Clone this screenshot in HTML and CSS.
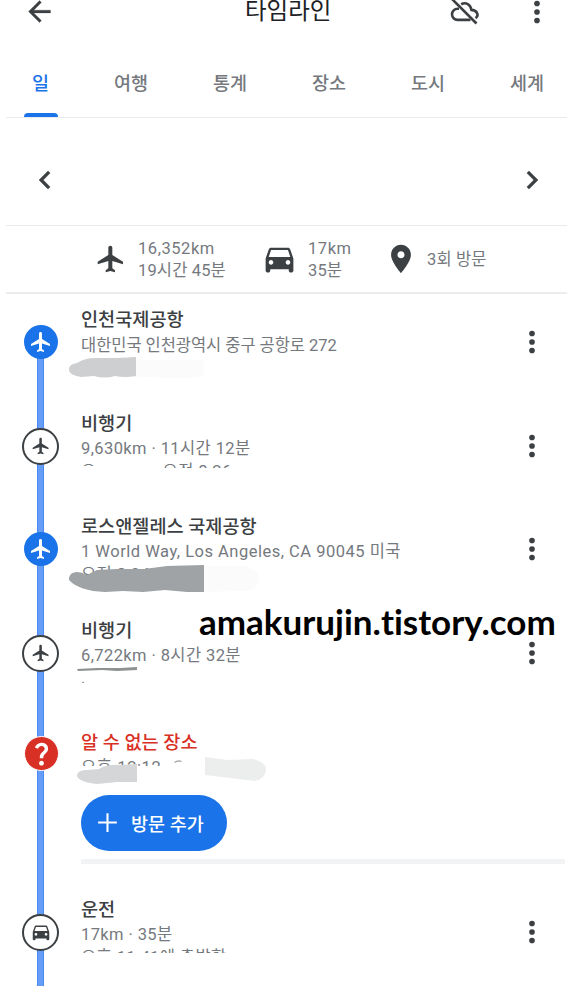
FILE: index.html
```html
<!DOCTYPE html>
<html lang="ko">
<head>
    <meta charset="UTF-8">
    <meta name="viewport" content="width=device-width, initial-scale=1.0">
    <title>타임라인</title>
    <link rel="stylesheet" href="styles.css">
</head>
<body>
    <!-- shared icons -->
    <svg class="defs" width="0" height="0">
        <symbol id="plane" viewBox="0 0 24 24"><path d="M21 16v-2l-8-5V3.5c0-.83-.67-1.5-1.5-1.5S10 2.67 10 3.5V9l-8 5v2l8-2.5V19l-2 1.5V22l3.5-1 3.5 1v-1.5L13 19v-5.5l8 2.5z"/></symbol>
        <symbol id="car" viewBox="0 0 24 24"><path d="M18.92 6.01C18.72 5.42 18.16 5 17.5 5h-11c-.66 0-1.21.42-1.42 1.01L3 12v8c0 .55.45 1 1 1h1c.55 0 1-.45 1-1v-1h12v1c0 .55.45 1 1 1h1c.55 0 1-.45 1-1v-8l-2.08-5.99zM6.5 16c-.83 0-1.5-.67-1.5-1.5S5.67 13 6.5 13s1.5.67 1.5 1.5S7.33 16 6.5 16zm11 0c-.83 0-1.5-.67-1.5-1.5s.67-1.5 1.5-1.5 1.5.67 1.5 1.5-.67 1.5-1.5 1.5zM5 11l1.5-4.5h11L19 11H5z"/></symbol>
        <symbol id="more" viewBox="0 0 24 24"><circle cx="12" cy="6" r="2"/><circle cx="12" cy="12" r="2"/><circle cx="12" cy="18" r="2"/></symbol>
    </svg>

    <div class="app">
        <header class="header">
            <svg class="back" viewBox="0 0 24 24"><path d="M20 11H7.83l5.59-5.59L12 4l-8 8 8 8 1.41-1.41L7.83 13H20v-2z"/></svg>
            <h1>타임라인</h1>
            <svg class="cloud" viewBox="0 0 29 29">
                <g fill="none" stroke="#3c4043" stroke-width="2.6">
                    <path d="M9 9.7H7.6A5.6 5.6 0 0 0 7.6 20.9H20.5"/>
                    <path d="M11.2 5.4C15 2.8 20.5 4.6 21.4 10.9C27.5 11.2 29.2 16.5 25.6 19.2"/>
                    <path d="M2 0L26.5 24.5"/>
                </g>
            </svg>
            <svg class="more"><use href="#more"/></svg>
        </header>

        <nav class="tabs">
            <div class="tab active">일</div>
            <div class="tab">여행</div>
            <div class="tab">통계</div>
            <div class="tab">장소</div>
            <div class="tab">도시</div>
            <div class="tab">세계</div>
        </nav>

        <div class="date-nav">
            <svg viewBox="0 0 24 24"><path d="M15.41 7.41L14 6l-6 6 6 6 1.41-1.41L10.83 12z"/></svg>
            <svg viewBox="0 0 24 24"><path d="M10 6L8.59 7.41 13.17 12l-4.58 4.59L10 18l6-6z"/></svg>
        </div>

        <div class="summary">
            <svg class="sum-plane"><use href="#plane"/></svg>
            <div class="stat stat-flight">16,352km<br><span class="tight">19시간 45분</span></div>
            <svg class="sum-car"><use href="#car"/></svg>
            <div class="stat stat-drive">17km<br><span class="tight">35분</span></div>
            <svg class="sum-pin" viewBox="0 0 24 24"><path d="M12 2C8.13 2 5 5.13 5 9c0 5.25 7 13 7 13s7-7.75 7-13c0-3.87-3.13-7-7-7zm0 9.5c-1.38 0-2.5-1.12-2.5-2.5s1.12-2.5 2.5-2.5 2.5 1.12 2.5 2.5-1.12 2.5-2.5 2.5z"/></svg>
            <div class="stat tight">3회 방문</div>
        </div>

        <main class="timeline">
            <div class="entry first">
                <div class="node place"><svg><use href="#plane"/></svg></div>
                <div class="info">
                    <h2>인천국제공항</h2>
                    <p class="address-kr">대한민국 인천광역시 중구 공항로 272</p>
                    <svg class="smudge smudge-1" viewBox="0 0 140 24">
                        <path fill="#fbfbfb" d="M60 3H134V20Q100 22 60 19z"/>
                        <path fill="#cecfd1" d="M0 11Q1 7 8 6Q16 1 26 1L48 1L67 0V19Q56 21 46 19Q36 22 25 19L12 20Q0 18 0 13z"/>
                    </svg>
                </div>
                <svg class="more"><use href="#more"/></svg>
            </div>

            <div class="entry">
                <div class="node move"><svg><use href="#plane"/></svg></div>
                <div class="info">
                    <h2>비행기</h2>
                    <p>9,630km · 11시간 12분</p>
                    <p class="cut cut-flight"><span class="faint">오</span><span>오전 8:26</span></p>
                </div>
                <svg class="more"><use href="#more"/></svg>
            </div>

            <div class="entry">
                <div class="node place"><svg><use href="#plane"/></svg></div>
                <div class="info">
                    <h2>로스앤젤레스 국제공항</h2>
                    <p class="address">1 World Way, Los Angeles, CA 90045 미국</p>
                    <p class="cut cut-la">오전 8:24</p>
                    <svg class="smudge smudge-2" viewBox="0 0 192 28">
                        <path fill="#fbfbfb" d="M130 1L172 1Q190 3 190 14Q190 26 172 26L130 27z"/>
                        <path fill="#9fa3a5" d="M0 13Q1 7 8 7Q13 7 18 10L28 5L48 4L75 4L98 1L135 0V27L118 27L96 25L74 27L54 26L36 27Q10 26 0 15z"/>
                    </svg>
                </div>
                <svg class="more"><use href="#more"/></svg>
            </div>

            <div class="entry second-flight">
                <div class="node move"><svg><use href="#plane"/></svg></div>
                <div class="info">
                    <h2>비행기</h2>
                    <p>6,722km · 8시간 32분</p>
                    <svg class="smudge smudge-3" viewBox="0 0 62 18">
                        <path fill="#8e9192" d="M0 2L20 1L43 1L60 0V3L40 4L25 3L1 4z"/>
                        <path fill="#a0a3a5" d="M5 15L7 14.5V16H5z"/>
                    </svg>
                </div>
                <svg class="more"><use href="#more"/></svg>
            </div>

            <div class="entry unknown">
                <div class="node question"><svg viewBox="0 0 24 24"><path d="M11.07 12.85c.77-1.39 2.25-2.21 3.11-3.44.91-1.29.4-3.7-2.18-3.7-1.69 0-2.52 1.28-2.87 2.34L6.54 6.96C7.25 4.83 9.18 3 11.99 3c2.35 0 3.96 1.07 4.78 2.41.7 1.15 1.11 3.3.03 4.9-1.2 1.77-2.35 2.31-2.97 3.45-.25.46-.35.76-.35 2.24h-2.89c-.01-.78-.13-2.05.48-3.15zM14 20c0 1.1-.9 2-2 2s-2-.9-2-2 .9-2 2-2 2 .9 2 2z"/></svg></div>
                <div class="info">
                    <h2>알 수 없는 장소</h2>
                    <p class="cut cut-unknown">오후 12:12</p>
                    <svg class="smudge smudge-4" viewBox="0 0 190 28">
                        <path fill="#a9abad" d="M97 6Q101 3 105 5L104 6Q101 5 98 7z"/>
                        <path fill="#eceded" d="M128 1L150 4L176 3Q189 6 189 14Q188 23 178 25L128 19z"/>
                        <path fill="#d5d6d8" d="M0 19Q1 14 10 14L22 13Q30 8 43 9L60 8V26L40 26L20 28Q2 26 0 20z"/>
                    </svg>
                    <button class="add-btn">
                        <svg viewBox="0 0 24 24"><path d="M21 13h-8v8h-2v-8H3v-2h8V3h2v8h8z"/></svg>
                        방문 추가
                    </button>
                    <div class="divider"></div>
                </div>
                <svg class="more"><use href="#more"/></svg>
            </div>

            <div class="entry">
                <div class="node move drive"><svg><use href="#car"/></svg></div>
                <div class="info">
                    <h2>운전</h2>
                    <p>17km · 35분</p>
                    <p class="cut cut-drive">오후 11:41에 출발함</p>
                </div>
                <svg class="more"><use href="#more"/></svg>
            </div>
        </main>

        <div class="watermark">amakurujin.tistory.com</div>
    </div>
</body>
</html>
```
FILE: styles.css
```css
* {
    box-sizing: border-box;
}

body {
    margin: 0;
    background-color: #fff;
    color: #3c4043;
    font-family: Roboto, "Noto Sans CJK KR", sans-serif;
}

h1, h2, p {
    margin: 0;
}

svg {
    display: block;
    fill: #3c4043;
    flex: none;
}

.defs {
    position: absolute;
}

.app {
    position: relative;
    height: 986px;
    padding: 0 6px;
    overflow: hidden;
}

.more {
    width: 34px;
    height: 34px;
}

/* header */
.header {
    display: flex;
    align-items: center;
    height: 23px;
    padding: 0 13px 0 17px;
}

.back {
    width: 33px;
    height: 33px;
    stroke: #3c4043;
    stroke-width: 0.2;
}

.header h1 {
    flex: 1;
    padding: 0 0 1px 189px;
    font-size: 23.5px;
    font-weight: 400;
    line-height: 22px;
    color: #202124;
}

.cloud {
    width: 29px;
    height: 29px;
    margin: 3px 41px 0 0;
}

.tabs {
    display: flex;
    justify-content: space-between;
    height: 95px;
    padding: 0 23px 0 26px;
    border-bottom: 1px solid #e8eaed;
}

.tab {
    padding-top: 47px;
    font-size: 18.5px;
    font-weight: 500;
    line-height: 28px;
    color: #75797e;
}

.tab.active {
    color: #1a73e8;
    display: flex;
    flex-direction: column;
    justify-content: space-between;
    align-items: center;
}

.tab.active::after {
    content: "";
    width: 34px;
    height: 4px;
    margin: 0 -9px;
    border-radius: 4px 4px 0 0;
    background-color: #1a73e8;
}

.date-nav {
    display: flex;
    justify-content: space-between;
    align-items: center;
    height: 108px;
    padding: 16px 17px 0 21px;
    border-bottom: 1px solid #e8eaed;
}

.date-nav svg {
    width: 36px;
    height: 36px;
    stroke: #3c4043;
    stroke-width: 0.3;
}

/* day totals */
.summary {
    display: flex;
    align-items: center;
    height: 68px;
    padding-left: 89px;
    border-bottom: 2px solid #eceded;
}

.stat {
    padding-top: 1px;
    font-size: 16.5px;
    line-height: 22px;
    letter-spacing: 0.55px;
    color: #75797e;
}

.tight {
    letter-spacing: 0.15px;
}

.sum-plane {
    width: 32px;
    height: 32px;
    margin-right: 11px;
}

.stat-flight {
    width: 124px;
}

.sum-car {
    width: 37px;
    height: 37px;
    margin: -2px 10px 0 -1px;
}

.stat-drive {
    width: 76px;
}

.sum-pin {
    width: 34px;
    height: 34px;
    margin-right: 9px;
}

/* timeline */
.timeline {
    padding-top: 13px;
}

.entry {
    display: grid;
    grid-template-columns: 75px 1fr 34px;
    position: relative;
    height: 103.5px;
    padding-right: 18px;
}

/* blue rail */
.entry::before {
    content: "";
    position: absolute;
    left: 31px;
    top: 0;
    bottom: 0;
    width: 5px;
    background-color: #669df6;
    border: solid #4a8af4;
    border-width: 0 1px;
}

.entry.first::before {
    top: 36px;
}

.node {
    position: relative;
    display: flex;
    align-items: center;
    justify-content: center;
    width: 37px;
    height: 37px;
    margin: 17px 0 0 16px;
    border-radius: 50%;
}

.node svg {
    width: 24px;
    height: 24px;
    fill: #fff;
}

.place {
    width: 34px;
    height: 34px;
    margin: 18px 0 0 18px;
    background-color: #1a73e8;
}

.move {
    background-color: #fff;
    border: 2px solid #3c4043;
}

.move svg {
    width: 20px;
    height: 20px;
    fill: #3c4043;
}

.move.drive svg {
    width: 22px;
    height: 22px;
}

.question {
    width: 35px;
    height: 35px;
    background-color: #d93025;
    border: 1px solid #fff;
    margin: 6px 0 0 18px;
}

.question svg {
    width: 29px;
    height: 29px;
}

.entry > .more {
    margin-top: 18px;
}

.info {
    position: relative;
}

.info h2 {
    font-size: 18.6px;
    font-weight: 500;
    line-height: 26px;
    white-space: nowrap;
}

.info p {
    font-size: 16.5px;
    line-height: 23px;
    letter-spacing: 0.4px;
    color: #75797e;
    white-space: nowrap;
}

.info .address-kr {
    padding-top: 1px;
    letter-spacing: -0.05px;
}

.info .address {
    letter-spacing: 0.5px;
}

.info .cut {
    overflow: hidden;
}

.cut-flight {
    display: flex;
    gap: 66px;
    height: 8px;
}

.faint {
    height: 6px;
    overflow: hidden;
}

.cut-la {
    height: 16px;
}

.cut-drive {
    height: 7px;
}

.smudge {
    position: absolute;
}

.smudge-1 {
    left: -12px;
    top: 50px;
    width: 140px;
    height: 24px;
}

.smudge-2 {
    left: -12px;
    top: 51px;
    width: 192px;
    height: 28px;
}

.smudge-3 {
    left: -4px;
    top: 49px;
    width: 62px;
    height: 18px;
}

.smudge-4 {
    left: -4px;
    top: 26px;
    width: 190px;
    height: 28px;
}

.second-flight {
    height: 112px;
}

.unknown {
    height: 167px;
}

.unknown h2 {
    color: #d93025;
}

.unknown > .more {
    margin-top: 6px;
}

.info .cut-unknown {
    height: 10px;
    letter-spacing: 0.6px;
}

.add-btn {
    display: flex;
    align-items: center;
    gap: 11px;
    width: 146px;
    height: 56px;
    margin-top: 29px;
    padding: 0 0 0 14px;
    border: none;
    border-radius: 28px;
    background-color: #1a73e8;
    color: #fff;
    font: 500 18.5px Roboto, "Noto Sans CJK KR", sans-serif;
}

.add-btn svg {
    width: 25px;
    height: 25px;
    fill: #fff;
}

.divider {
    width: 484px;
    height: 5px;
    margin-top: 8px;
    background-color: #f1f3f4;
}

.watermark {
    position: absolute;
    left: 199px;
    top: 598px;
    font-family: Lato, sans-serif;
    font-size: 35px;
    font-weight: 700;
    font-variant-ligatures: none;
    line-height: 46px;
    color: #000;
    white-space: nowrap;
}
```
